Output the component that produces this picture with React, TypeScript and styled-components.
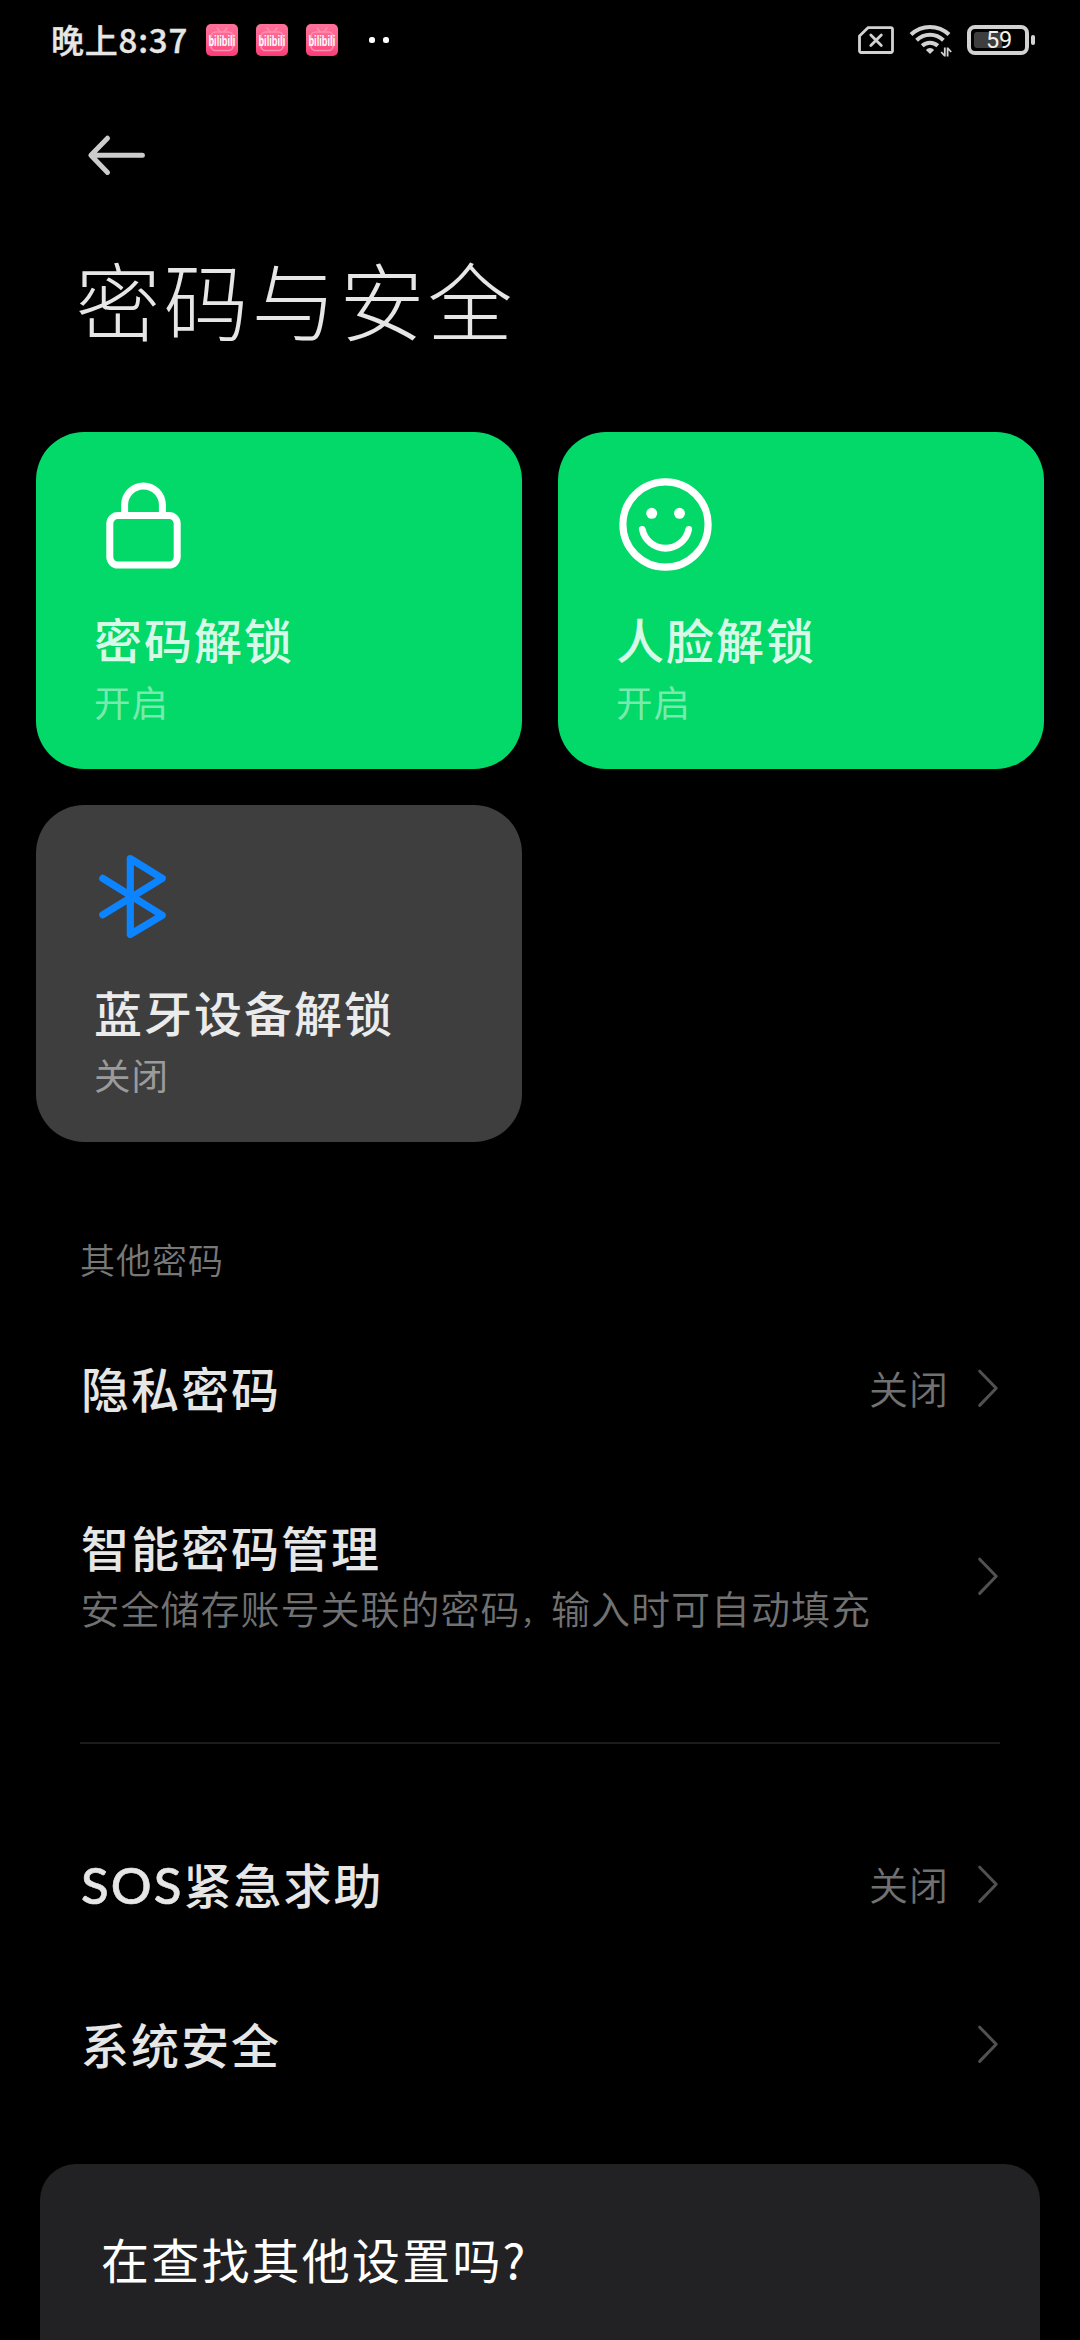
import React from "react";
import styled, { createGlobalStyle } from "styled-components";

const GlobalStyle = createGlobalStyle`
  * { box-sizing: border-box; }
  html, body { margin: 0; padding: 0; background: #000; }
  body {
    font-family: "Noto Sans CJK SC", "Noto Sans", sans-serif;
    overflow: hidden;
  }
`;

const Screen = styled.div`
  width: 1080px;
  height: 2340px;
  overflow: hidden;
  background: #000;
  color: #e6e6e6;
  display: flex;
  flex-direction: column;
`;

const StatusBar = styled.header`
  flex: none;
  height: 80px;
  padding: 0 45px 0 51px;
  display: flex;
  justify-content: space-between;
  align-items: center;
`;

const StatusGroup = styled.div<{ $gap: number }>`
  display: flex;
  align-items: center;
  gap: ${(p) => p.$gap}px;
`;

const Clock = styled.span`
  font-size: 33px;
  line-height: 44px;
  font-weight: 500;
  letter-spacing: 0.8px;
  width: 137px;
  white-space: nowrap;
  padding-bottom: 2px;
  -webkit-text-stroke: 0.4px currentColor;
`;

const MoreDots = styled.span`
  display: flex;
  gap: 8px;
  margin-left: 13px;
  &::before, &::after {
    content: "";
    width: 6px;
    height: 6px;
    border-radius: 2.5px;
    background: #fff;
  }
`;

const Battery = styled.span`
  display: flex;
  align-items: center;
  gap: 2px;
`;

const BatteryBody = styled.span`
  width: 62px;
  height: 30px;
  border: 4px solid #d2d2d2;
  border-radius: 8px;
  padding: 3px;
  display: grid;
  align-items: center;
`;

const BatteryFill = styled.span<{ $level: number }>`
  grid-area: 1 / 1;
  height: 16px;
  width: ${(p) => p.$level}%;
  border-radius: 3px 0 0 3px;
  background: #3e3e3e;
`;

const BatteryText = styled.span`
  grid-area: 1 / 1;
  justify-self: center;
  font: 400 23.5px/16px Roboto, sans-serif;
  letter-spacing: -0.3px;
  color: #f0f0f0;
  padding-left: 2px;
`;

const BatteryTip = styled.span`
  width: 4px;
  height: 10px;
  border-radius: 2px;
  background: #d2d2d2;
`;

const NavBar = styled.nav`
  flex: none;
  height: 168px;
  padding: 51px 0 0 84px;
`;

const PageTitle = styled.h1`
  flex: none;
  margin: 0 0 84px 75.5px;
  font-size: 85px;
  line-height: 100px;
  font-weight: 200;
  letter-spacing: 3px;
`;

const CardGrid = styled.section`
  flex: none;
  display: grid;
  grid-template-columns: 486px 486px;
  grid-auto-rows: 337px;
  gap: 36px;
  padding: 0 36px;
`;

const Card = styled.article<{ $on: boolean }>`
  border-radius: 48px;
  background: ${(p) => (p.$on ? "#03d968" : "#3e3e3e")};
  color: ${(p) => (p.$on ? "rgba(255,255,255,0.87)" : "#ebebeb")};
  padding: 44px 58px 0;
  display: flex;
  flex-direction: column;
  align-items: flex-start;
`;

const CardTitle = styled.h2`
  margin: 38px 0 0;
  font-size: 48px;
  line-height: 56px;
  font-weight: 500;
  letter-spacing: 2px;
`;

const CardState = styled.p<{ $on: boolean }>`
  margin: 14px 0 0;
  font-size: 36.5px;
  line-height: 44px;
  letter-spacing: 1px;
  color: ${(p) => (p.$on ? "rgba(255,255,255,0.47)" : "#9b9b9b")};
`;

const SectionLabel = styled.h3`
  flex: none;
  margin: 95px 0 27px 80px;
  font-size: 35px;
  line-height: 44px;
  font-weight: 350;
  letter-spacing: 1px;
  color: #787878;
`;

const Row = styled.div<{ $tall?: boolean }>`
  flex: none;
  height: ${(p) => (p.$tall ? 215 : 160)}px;
  padding: 0 80px;
  display: flex;
  align-items: center;
`;

const RowText = styled.div`
  flex: 1;
  padding: 0 0 3px 1px;
`;

const RowTitle = styled.div`
  font-size: 48px;
  line-height: 60px;
  font-weight: 500;
  letter-spacing: 2px;
`;

const Latin = styled.span`
  font-family: Lato, sans-serif;
  font-size: 51px;
  line-height: 1;
  letter-spacing: 2px;
  -webkit-text-stroke: 0.6px currentColor;
`;

const RowNote = styled.div`
  margin: 5px 0 0 -0.5px;
  font-size: 39px;
  line-height: 52px;
  font-weight: 350;
  letter-spacing: 1px;
  color: #717171;
  white-space: nowrap;
`;

const Comma = styled.span`
  font-size: 30px;
  line-height: 1;
  letter-spacing: 0.5px;
`;

const RowValue = styled.span`
  font-size: 39px;
  line-height: 52px;
  font-weight: 350;
  letter-spacing: 1px;
  color: #717171;
  padding-bottom: 2px;
  margin-right: 28px;
`;

const Divider = styled.hr`
  flex: none;
  width: 920px;
  height: 2px;
  border: 0;
  margin: 59px 80px 60px;
  background: #1c1c1c;
`;

const Suggestions = styled.section`
  flex: 1;
  margin: 40px 40px 0;
  padding: 64px 61px 0;
  border-radius: 36px 36px 0 0;
  background: #222224;
  color: #fff;
  font-size: 48px;
  line-height: 60px;
  letter-spacing: 2.2px;
`;

const AppIcon = ({ id }: { id: string }) => (
  <svg width="32" height="32" viewBox="0 0 32 32">
    <defs>
      <linearGradient id={id} x1="0" y1="0" x2="0" y2="1">
        <stop offset="0" stopColor="#ff7299" />
        <stop offset="0.6" stopColor="#ff5c8c" />
        <stop offset="1" stopColor="#fb3a78" />
      </linearGradient>
    </defs>
    <rect width="32" height="32" rx="5" fill={`url(#${id})`} />
    <g fill="none" stroke="#ff8fb0" strokeWidth="1.6" strokeLinecap="round">
      <rect x="5" y="8" width="22" height="18.5" rx="4.5" />
      <path d="M11 4l3 3.5M21 4l-3 3.5" />
    </g>
    <text
      x="2.4"
      y="14.4"
      transform="scale(1 1.5)"
      fontFamily="Liberation Sans, sans-serif"
      fontWeight="700"
      fontSize="9.3"
      fill="#fff"
    >
      bilibili
    </text>
  </svg>
);

const NoSimIcon = () => (
  <svg width="36" height="28" viewBox="0 0 36 28" fill="none" stroke="#d2d2d2" strokeWidth="2.8" strokeLinejoin="round" strokeLinecap="round">
    <path d="M10.2 1.6H33a1.5 1.5 0 0 1 1.5 1.5V25a1.5 1.5 0 0 1-1.5 1.5H3A1.5 1.5 0 0 1 1.5 25V10Z" />
    <path d="M12.8 9L23.3 19.5M23.3 9L12.8 19.5" />
  </svg>
);

const WifiIcon = () => (
  <svg width="43" height="34" viewBox="0 0 43 34" fill="none" stroke="#d2d2d2">
    <path d="M2 11.5A27.5 27.5 0 0 1 40 11.5" strokeWidth="4" />
    <path d="M7.6 17.2A19.2 19.2 0 0 1 34.4 17.2" strokeWidth="4" />
    <path d="M13.2 22.8A11.2 11.2 0 0 1 28.8 22.8" strokeWidth="4" />
    <path d="M16.9 27A5.4 5.4 0 0 1 25.1 27L21 31Z" fill="#d2d2d2" stroke="none" />
    <path d="M35.8 24.5V33.5M35.8 33L32.2 29M38.6 33.5V24.5M38.6 25L42.2 29" strokeWidth="1.8" />
  </svg>
);

const BackIcon = () => (
  <svg width="64" height="48" viewBox="0 0 64 48" fill="none" stroke="#ccc" strokeWidth="5" strokeLinecap="round" strokeLinejoin="round">
    <path d="M23.5 7.2L6.9 24.3L23.5 41.4M7.5 24.3H58.4" />
  </svg>
);

const LockIcon = () => (
  <svg width="96" height="96" viewBox="0 0 96 96" fill="none" stroke="#fff" strokeWidth="7">
    <rect x="15.8" y="39.6" width="67.4" height="49.4" rx="8" />
    <path d="M30.6 39V28.8a18.9 18.9 0 0 1 37.8 0V39" />
  </svg>
);

const FaceIcon = () => (
  <svg width="96" height="96" viewBox="0 0 96 96" fill="none" stroke="#fff" strokeWidth="7.2">
    <circle cx="49.5" cy="48.5" r="42.6" />
    <path d="M26.3 53.4a23.7 23.7 0 0 0 46.4 0" strokeWidth="6.8" strokeLinecap="round" />
    <circle cx="35.7" cy="37.3" r="5.5" fill="#fff" stroke="none" />
    <circle cx="63.5" cy="37.3" r="5.5" fill="#fff" stroke="none" />
  </svg>
);

const BluetoothIcon = () => (
  <svg width="96" height="96" viewBox="0 0 96 96" fill="none" stroke="#0d84ff" strokeWidth="7.2" strokeLinecap="round" strokeLinejoin="round">
    <path d="M8.8 29.4L68.2 66.3L36.3 85.4V9.6L68.2 29.4L8.8 65.8" />
  </svg>
);

const Chevron = () => (
  <svg width="23" height="40" viewBox="0 0 23 40" fill="none" stroke="#515151" strokeWidth="3" strokeLinecap="round" strokeLinejoin="round">
    <path d="M2.7 3.2L19.2 20.3L2.7 37.4" />
  </svg>
);

const cards = [
  { title: "密码解锁", on: true, Icon: LockIcon },
  { title: "人脸解锁", on: true, Icon: FaceIcon },
  { title: "蓝牙设备解锁", on: false, Icon: BluetoothIcon },
];

export default function App() {
  return (
    <>
      <GlobalStyle />
      <Screen>
        <StatusBar>
          <StatusGroup $gap={18}>
            <Clock>晚上8:37</Clock>
            <AppIcon id="app-a" />
            <AppIcon id="app-b" />
            <AppIcon id="app-c" />
            <MoreDots />
          </StatusGroup>
          <StatusGroup $gap={15}>
            <NoSimIcon />
            <WifiIcon />
            <Battery>
              <BatteryBody>
                <BatteryFill $level={59} />
                <BatteryText>59</BatteryText>
              </BatteryBody>
              <BatteryTip />
            </Battery>
          </StatusGroup>
        </StatusBar>
        <NavBar>
          <BackIcon />
        </NavBar>
        <PageTitle>密码与安全</PageTitle>
        <CardGrid>
          {cards.map(({ title, on, Icon }) => (
            <Card key={title} $on={on}>
              <Icon />
              <CardTitle>{title}</CardTitle>
              <CardState $on={on}>{on ? "开启" : "关闭"}</CardState>
            </Card>
          ))}
        </CardGrid>
        <SectionLabel>其他密码</SectionLabel>
        <Row>
          <RowText>
            <RowTitle>隐私密码</RowTitle>
          </RowText>
          <RowValue>关闭</RowValue>
          <Chevron />
        </Row>
        <Row $tall>
          <RowText>
            <RowTitle>智能密码管理</RowTitle>
            <RowNote>
              安全储存账号关联的密码<Comma>，</Comma>输入时可自动填充
            </RowNote>
          </RowText>
          <Chevron />
        </Row>
        <Divider />
        <Row>
          <RowText>
            <RowTitle>
              <Latin>SOS</Latin>紧急求助
            </RowTitle>
          </RowText>
          <RowValue>关闭</RowValue>
          <Chevron />
        </Row>
        <Row>
          <RowText>
            <RowTitle>系统安全</RowTitle>
          </RowText>
          <Chevron />
        </Row>
        <Suggestions>在查找其他设置吗?</Suggestions>
      </Screen>
    </>
  );
}
